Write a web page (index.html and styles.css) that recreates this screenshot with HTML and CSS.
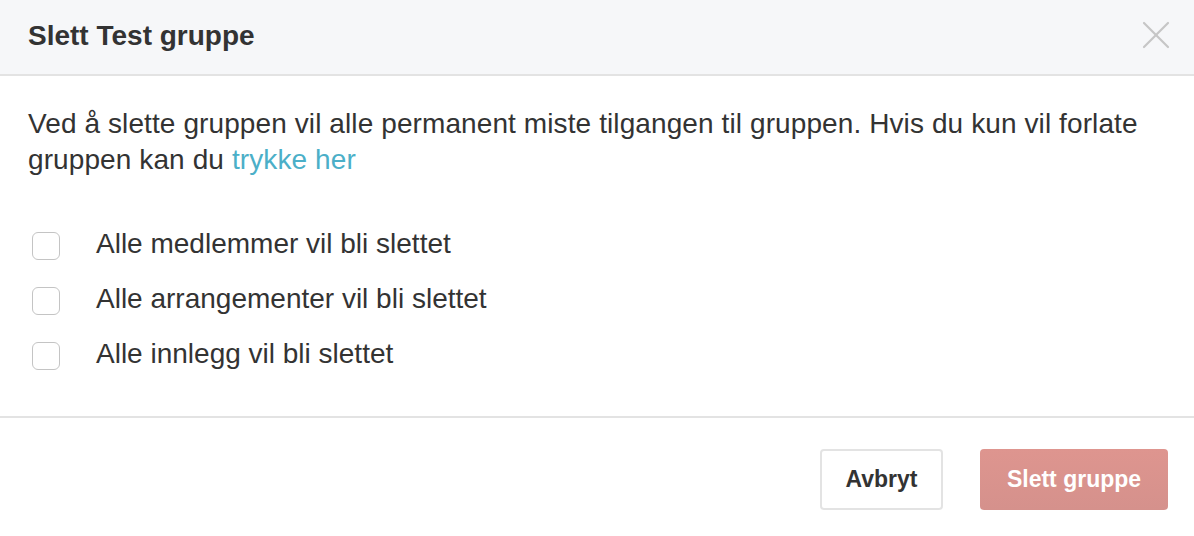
FILE: index.html
```html
<!DOCTYPE html>
<html lang="no">
<head>
    <meta charset="UTF-8">
    <meta name="viewport" content="width=device-width, initial-scale=1.0">
    <title>Slett gruppe</title>
    <link rel="stylesheet" href="styles.css">
</head>
<body>
    <div class="modal">
        <div class="modal-header">
            <h1>Slett Test gruppe</h1>
            <button class="close-button" aria-label="Lukk">
                <svg width="28" height="28" viewBox="0 0 28 28" fill="none" stroke="currentColor" stroke-width="2.2" stroke-linecap="round">
                    <line x1="2" y1="2" x2="26" y2="26"></line>
                    <line x1="26" y1="2" x2="2" y2="26"></line>
                </svg>
            </button>
        </div>
        <div class="modal-body">
            <p class="intro">
                Ved å slette gruppen vil alle permanent miste tilgangen til gruppen. Hvis du kun vil forlate
                gruppen kan du <a href="#">trykke her</a>
            </p>
            <label class="check-row">
                <input type="checkbox">
                <span class="checkmark"></span>
                <span>Alle medlemmer vil bli slettet</span>
            </label>
            <label class="check-row">
                <input type="checkbox">
                <span class="checkmark"></span>
                <span>Alle arrangementer vil bli slettet</span>
            </label>
            <label class="check-row">
                <input type="checkbox">
                <span class="checkmark"></span>
                <span>Alle innlegg vil bli slettet</span>
            </label>
        </div>
        <div class="modal-footer">
            <button class="btn btn-cancel">Avbryt</button>
            <button class="btn btn-danger" disabled>Slett gruppe</button>
        </div>
    </div>
</body>
</html>
```

FILE: styles.css
```css
:root {
    --text-dark: #333333;
    --header-bg: #f6f7f9;
    --line-gray: #e3e3e3;
    --link-blue: #4bafc8;
    --danger-faded: #dc928c;
}

* {
    margin: 0;
    padding: 0;
    box-sizing: border-box;
}

body {
    font-family: "Liberation Sans", Arial, Helvetica, sans-serif;
    color: var(--text-dark);
    background: #ffffff;
}

.modal {
    width: 1194px;
    height: 536px;
    display: flex;
    flex-direction: column;
    background: #ffffff;
}

.modal-header {
    height: 76px;
    padding: 0 24px 0 28px;
    background: var(--header-bg);
    border-bottom: 2px solid var(--line-gray);
    display: flex;
    align-items: center;
    justify-content: space-between;
}

.modal-header h1 {
    font-size: 28px;
    font-weight: bold;
    margin-top: -2px;
}

.close-button {
    background: none;
    border: none;
    color: #c6c6c6;
    width: 28px;
    height: 28px;
    margin-top: -4px;
    cursor: pointer;
    display: flex;
}

.modal-body {
    padding: 30px 28px 33px;
    border-bottom: 2px solid var(--line-gray);
}

.intro {
    font-size: 28px;
    line-height: 36px;
    letter-spacing: 0.1px;
    margin-bottom: 40px;
}

.intro a {
    color: var(--link-blue);
    text-decoration: none;
}

.check-row {
    height: 55px;
    display: flex;
    align-items: center;
    gap: 36px;
    padding-left: 4px;
    font-size: 28px;
    cursor: pointer;
}

.check-row input {
    display: none;
}

.checkmark {
    width: 28px;
    height: 28px;
    flex-shrink: 0;
    border: 1px solid #c4c4c4;
    border-radius: 6px;
    background: #ffffff;
}

.check-row span:last-child {
    margin-top: -4px;
}

.modal-footer {
    flex: 1;
    display: flex;
    justify-content: flex-end;
    align-items: flex-start;
    gap: 37px;
    padding: 31px 26px 0;
}

.btn {
    height: 61px;
    font-family: inherit;
    font-size: 23px;
    font-weight: bold;
    border-radius: 4px;
    cursor: pointer;
}

.btn-cancel {
    width: 123px;
    background: #ffffff;
    color: var(--text-dark);
    border: 2px solid var(--line-gray);
}

.btn-danger {
    width: 188px;
    background: linear-gradient(#de958f, #d5918c);
    color: #ffffff;
    border: none;
}
```
